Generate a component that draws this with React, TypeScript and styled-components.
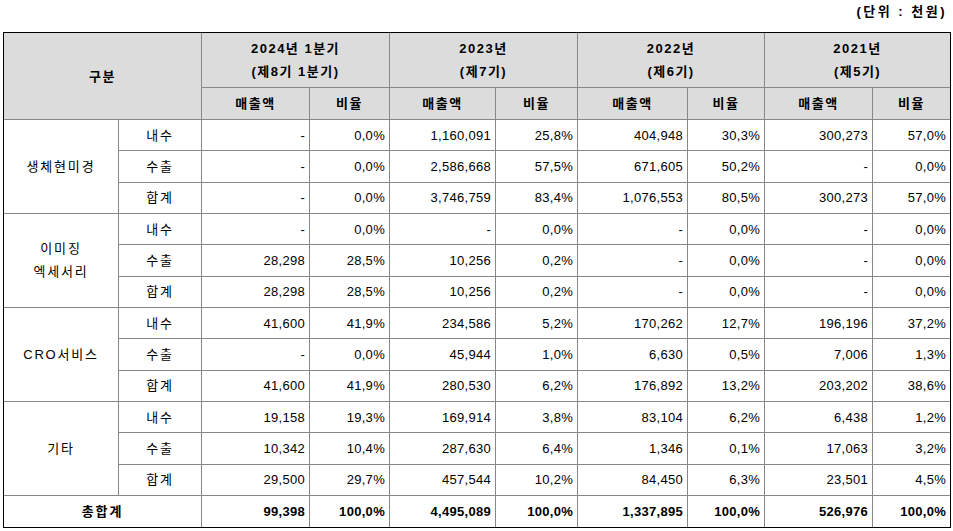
import React from 'react'
import styled, { createGlobalStyle } from 'styled-components'

const GlobalStyle = createGlobalStyle`
  body {
    margin: 0;
    background: #fff;
    font-family: 'Liberation Sans', 'Noto Sans CJK KR', sans-serif;
    color: #000;
  }
`

const Page = styled.div`
  width: 948px;
  padding: 0 2px 0 3px;
`

const Unit = styled.div`
  height: 32px;
  line-height: 23px;
  text-align: right;
  padding-right: 4px;
  font-size: 13px;
  font-weight: bold;
  letter-spacing: 2.5px;
`

const Table = styled.table`
  width: 948px;
  table-layout: fixed;
  border-collapse: separate;
  border-spacing: 0;
  border: 1px solid #000;
  font-size: 13px;
`

const Cell = styled.td`
  box-sizing: border-box;
  border-right: 1px solid #888;
  border-bottom: 1px solid #888;
  padding: 0 5px;
  line-height: 23px;
  white-space: nowrap;
  &:last-child {
    border-right: none;
  }
`

const HeadCell = styled(Cell).attrs({ as: 'th' })`
  background: #dcdcdc;
  font-weight: bold;
  text-align: center;
  letter-spacing: 1.5px;
`

const LabelCell = styled(Cell)`
  text-align: center;
  letter-spacing: 1.8px;
`

const NumCell = styled(Cell)<{ $bold?: boolean }>`
  text-align: right;
  padding-right: 4px;
  letter-spacing: 0.3px;
  font-weight: ${(p) => (p.$bold ? 'bold' : 'normal')};
`

const TotalLabel = styled(Cell)`
  text-align: center;
  font-weight: bold;
  letter-spacing: 1.8px;
`

const HeadRow = styled.tr<{ $h: number }>`
  height: ${(p) => p.$h}px;
`

const Row = styled.tr`
  height: 31.33px;
  &:last-child td {
    border-bottom: none;
  }
`

const widths = [115, 83, 108, 80, 106, 82, 110, 77, 108, 77]

const periods = [
  ['2024년 1분기', '(제8기 1분기)'],
  ['2023년', '(제7기)'],
  ['2022년', '(제6기)'],
  ['2021년', '(제5기)'],
]

const groups: { name: string[]; rows: string[][] }[] = [
  {
    name: ['생체현미경'],
    rows: [
      ['내수', '-', '0,0%', '1,160,091', '25,8%', '404,948', '30,3%', '300,273', '57,0%'],
      ['수출', '-', '0,0%', '2,586,668', '57,5%', '671,605', '50,2%', '-', '0,0%'],
      ['합계', '-', '0,0%', '3,746,759', '83,4%', '1,076,553', '80,5%', '300,273', '57,0%'],
    ],
  },
  {
    name: ['이미징', '엑세서리'],
    rows: [
      ['내수', '-', '0,0%', '-', '0,0%', '-', '0,0%', '-', '0,0%'],
      ['수출', '28,298', '28,5%', '10,256', '0,2%', '-', '0,0%', '-', '0,0%'],
      ['합계', '28,298', '28,5%', '10,256', '0,2%', '-', '0,0%', '-', '0,0%'],
    ],
  },
  {
    name: ['CRO서비스'],
    rows: [
      ['내수', '41,600', '41,9%', '234,586', '5,2%', '170,262', '12,7%', '196,196', '37,2%'],
      ['수출', '-', '0,0%', '45,944', '1,0%', '6,630', '0,5%', '7,006', '1,3%'],
      ['합계', '41,600', '41,9%', '280,530', '6,2%', '176,892', '13,2%', '203,202', '38,6%'],
    ],
  },
  {
    name: ['기타'],
    rows: [
      ['내수', '19,158', '19,3%', '169,914', '3,8%', '83,104', '6,2%', '6,438', '1,2%'],
      ['수출', '10,342', '10,4%', '287,630', '6,4%', '1,346', '0,1%', '17,063', '3,2%'],
      ['합계', '29,500', '29,7%', '457,544', '10,2%', '84,450', '6,3%', '23,501', '4,5%'],
    ],
  },
]

const total = ['99,398', '100,0%', '4,495,089', '100,0%', '1,337,895', '100,0%', '526,976', '100,0%']

const App = () => {
  return (
    <>
      <GlobalStyle />
      <Page>
        <Unit>(단위 : 천원)</Unit>
        <Table>
          <colgroup>
            {widths.map((w, i) => (
              <col key={i} style={{ width: w }} />
            ))}
          </colgroup>
          <thead>
            <HeadRow $h={55}>
              <HeadCell colSpan={2} rowSpan={2}>구분</HeadCell>
              {periods.map((p) => (
                <HeadCell key={p[0]} colSpan={2}>
                  {p[0]}
                  <br />
                  {p[1]}
                </HeadCell>
              ))}
            </HeadRow>
            <HeadRow $h={32}>
              {periods.map((p) => (
                <React.Fragment key={p[0]}>
                  <HeadCell>매출액</HeadCell>
                  <HeadCell>비율</HeadCell>
                </React.Fragment>
              ))}
            </HeadRow>
          </thead>
          <tbody>
            {groups.map((g) =>
              g.rows.map((r, i) => (
                <Row key={g.name[0] + i}>
                  {i === 0 && (
                    <LabelCell rowSpan={3}>
                      {g.name.map((n, k) => (
                        <React.Fragment key={n}>
                          {k > 0 && <br />}
                          {n}
                        </React.Fragment>
                      ))}
                    </LabelCell>
                  )}
                  <LabelCell>{r[0]}</LabelCell>
                  {r.slice(1).map((v, k) => (
                    <NumCell key={k}>{v}</NumCell>
                  ))}
                </Row>
              ))
            )}
            <Row>
              <TotalLabel colSpan={2}>총합계</TotalLabel>
              {total.map((v, k) => (
                <NumCell key={k} $bold>
                  {v}
                </NumCell>
              ))}
            </Row>
          </tbody>
        </Table>
      </Page>
    </>
  )
}

export default App
